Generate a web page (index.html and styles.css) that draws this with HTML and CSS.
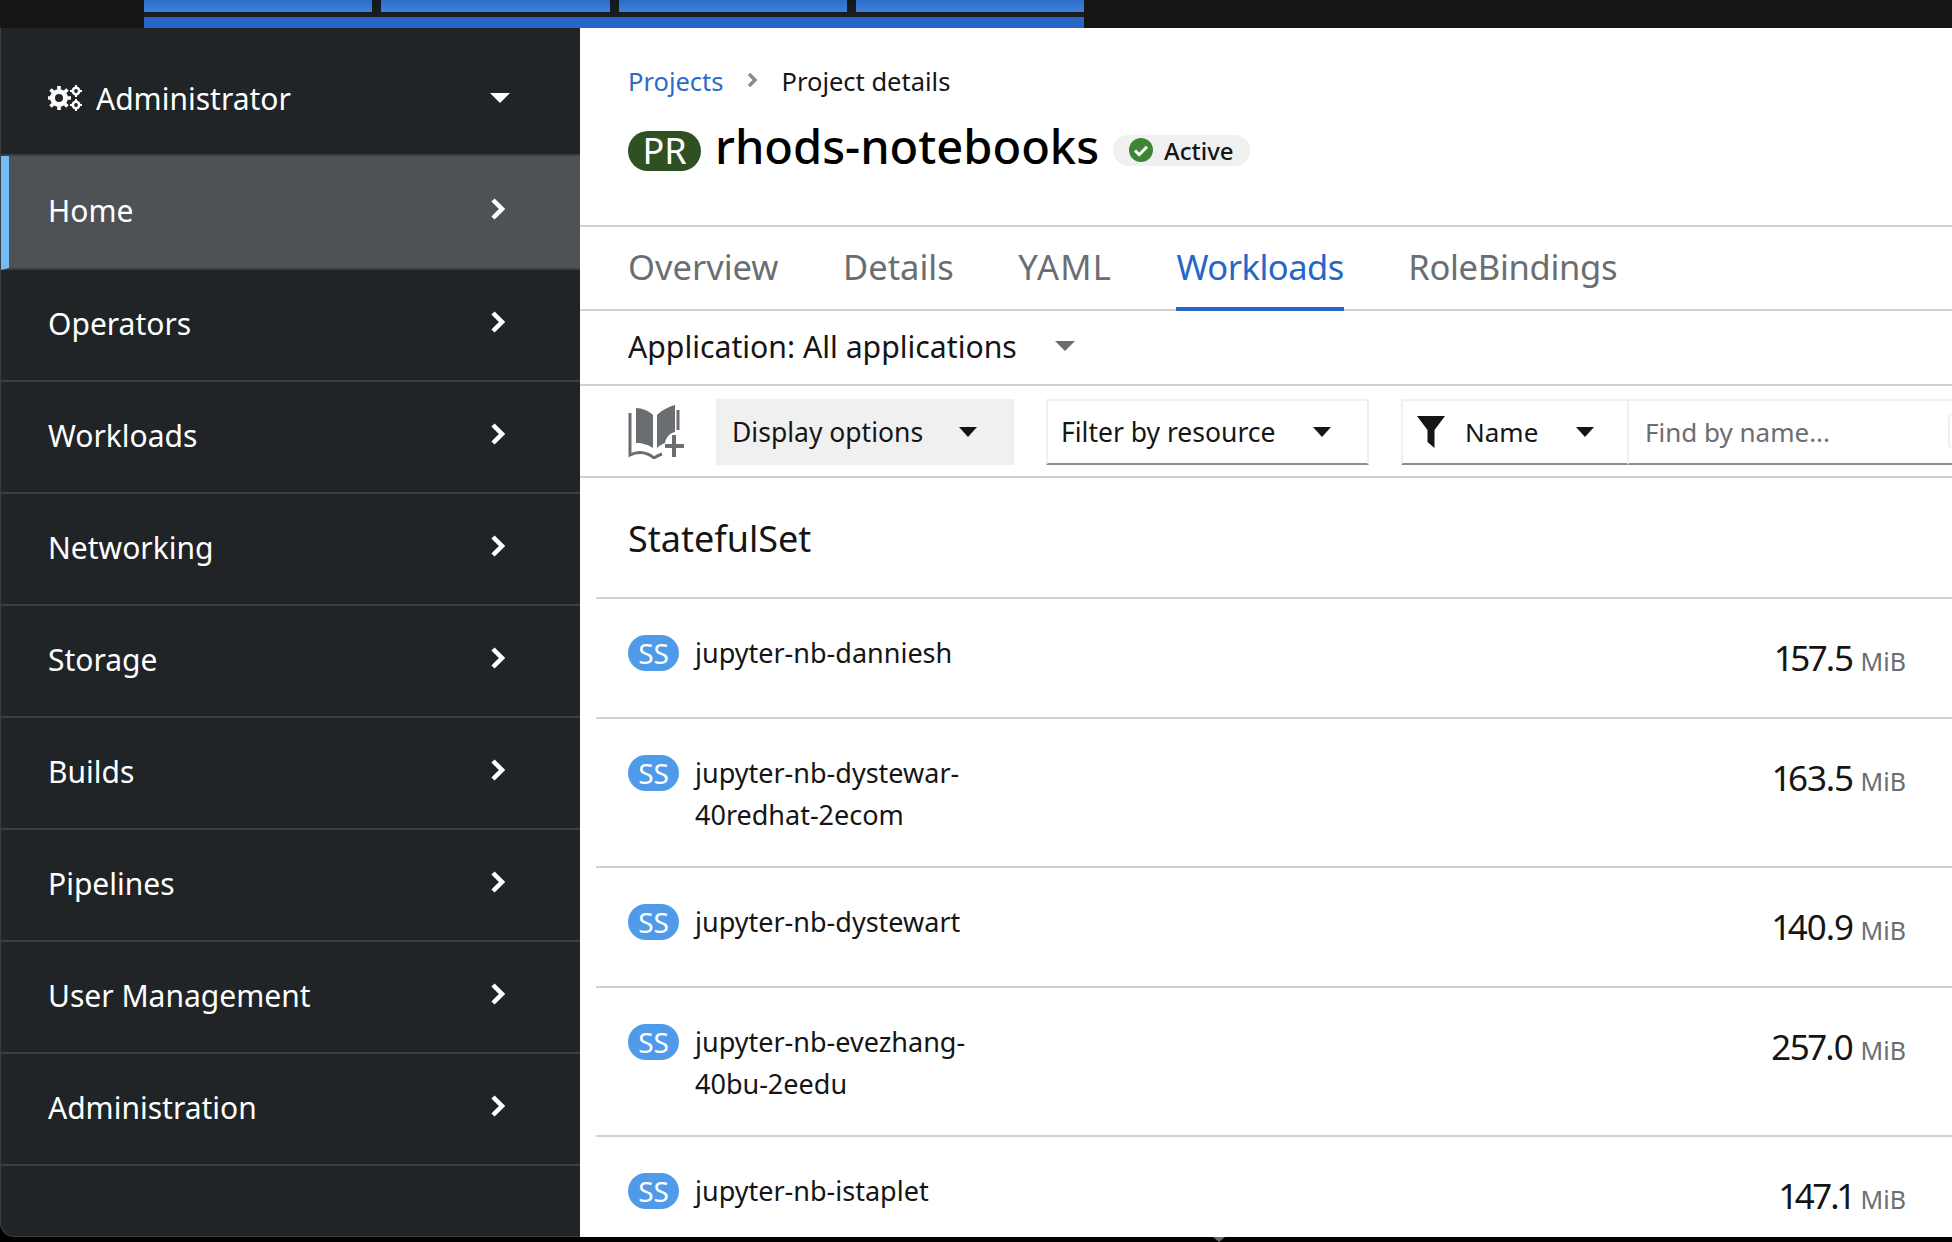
FILE: index.html
```html
<!DOCTYPE html>
<html lang="en">
<head>
  <meta charset="UTF-8">
  <title>rhods-notebooks</title>
  <link rel="stylesheet" href="styles.css">
</head>
<body>

  <div class="topbar">
    <div class="topbar-tabs">
      <span class="topbar-tab"></span>
      <span class="topbar-tab"></span>
      <span class="topbar-tab"></span>
      <span class="topbar-tab"></span>
    </div>
  </div>

  <div class="layout">
    <nav class="sidebar">
      <div class="perspective">
        <svg class="cogs" viewBox="0 0 34 26" width="34" height="26">
          <g fill="none" stroke="#fff">
            <circle cx="11" cy="13" r="6.5" stroke-width="5"/>
            <path d="M11 1v24M-1 13h24M2.5 4.5l17 17M19.5 4.5l-17 17" stroke-width="3.6" stroke-dasharray="3.6 16.8 3.6"/>
            <circle cx="28" cy="6" r="3.2" stroke-width="2.6"/>
            <circle cx="28" cy="20" r="3.2" stroke-width="2.6"/>
            <path d="M28 0v12M22 6h12M28 14v12M22 20h12" stroke-width="2" stroke-dasharray="2 8 2"/>
          </g>
        </svg>
        <span class="perspective-name">Administrator</span>
        <span class="caret caret-white"></span>
      </div>
      <a class="nav-item active">Home<svg class="chevron" viewBox="0 0 15 22"><path d="M3 2l9 9-9 9" /></svg></a>
      <a class="nav-item">Operators<svg class="chevron" viewBox="0 0 15 22"><path d="M3 2l9 9-9 9" /></svg></a>
      <a class="nav-item">Workloads<svg class="chevron" viewBox="0 0 15 22"><path d="M3 2l9 9-9 9" /></svg></a>
      <a class="nav-item">Networking<svg class="chevron" viewBox="0 0 15 22"><path d="M3 2l9 9-9 9" /></svg></a>
      <a class="nav-item">Storage<svg class="chevron" viewBox="0 0 15 22"><path d="M3 2l9 9-9 9" /></svg></a>
      <a class="nav-item">Builds<svg class="chevron" viewBox="0 0 15 22"><path d="M3 2l9 9-9 9" /></svg></a>
      <a class="nav-item">Pipelines<svg class="chevron" viewBox="0 0 15 22"><path d="M3 2l9 9-9 9" /></svg></a>
      <a class="nav-item">User Management<svg class="chevron" viewBox="0 0 15 22"><path d="M3 2l9 9-9 9" /></svg></a>
      <a class="nav-item">Administration<svg class="chevron" viewBox="0 0 15 22"><path d="M3 2l9 9-9 9" /></svg></a>
    </nav>

    <main class="content">
      <header class="page-head">
        <div class="breadcrumb">
          <a class="crumb-link">Projects</a>
          <svg class="crumb-sep" viewBox="0 0 12 18"><path d="M3 3l6 6-6 6" /></svg>
          <span>Project details</span>
        </div>
        <div class="title-row">
          <span class="badge-pr">PR</span>
          <h1>rhods-notebooks</h1>
          <span class="status">
            <svg viewBox="0 0 24 24" width="24" height="24">
              <circle cx="12" cy="12" r="12" fill="#3e8635"/>
              <path d="M6 12.500l4.200 4.200L18 8.800" fill="none" stroke="#fff" stroke-width="3"/>
            </svg>
            Active
          </span>
        </div>
      </header>

      <div class="tabs">
        <a class="tab">Overview</a>
        <a class="tab">Details</a>
        <a class="tab tab-yaml">YAML</a>
        <a class="tab current">Workloads</a>
        <a class="tab tab-last">RoleBindings</a>
      </div>

      <div class="app-bar">
        <span>Application: All applications</span>
        <span class="caret caret-grey"></span>
      </div>

      <div class="toolbar">
        <svg class="book" viewBox="0 0 56 54" width="56" height="54">
          <path fill="#6a6e73" d="M8 3c6 0 13 3 17 7v33c-4-3-11-5-17-5zM47 0v27c-5 1-9 5-10 11-3 1-6 3-8 5V10c4-4 11-8 18-10z"/>
          <path fill="none" stroke="#6a6e73" stroke-width="3" d="M2 8v42c8-4 17-3 24 3 3-2 5-3 8-4M50 5v20"/>
          <path fill="none" stroke="#6a6e73" stroke-width="4" d="M46 30v22M37 41h19"/>
        </svg>
        <div class="select select-grey">Display options<span class="caret"></span></div>
        <div class="select select-filter">Filter by resource<span class="caret"></span></div>
        <div class="search">
          <div class="search-type">
            <svg viewBox="0 0 28 32" width="28" height="32">
              <path fill="#151515" d="M0 0h28L17.500 14v18l-7-6V14z"/>
            </svg>
            Name
            <span class="caret"></span>
          </div>
          <input class="search-input" type="text" placeholder="Find by name...">
          <span class="search-hint"></span>
        </div>
      </div>

      <section class="resources">
        <h2>StatefulSet</h2>
        <div class="row">
          <span class="badge-ss">SS</span>
          <span class="row-name">jupyter-nb-danniesh</span>
          <span class="row-size">157.5 <small>MiB</small></span>
        </div>
        <div class="row">
          <span class="badge-ss">SS</span>
          <span class="row-name">jupyter-nb-dystewar-<br>40redhat-2ecom</span>
          <span class="row-size">163.5 <small>MiB</small></span>
        </div>
        <div class="row">
          <span class="badge-ss">SS</span>
          <span class="row-name">jupyter-nb-dystewart</span>
          <span class="row-size">140.9 <small>MiB</small></span>
        </div>
        <div class="row">
          <span class="badge-ss">SS</span>
          <span class="row-name">jupyter-nb-evezhang-<br>40bu-2eedu</span>
          <span class="row-size">257.0 <small>MiB</small></span>
        </div>
        <div class="row">
          <span class="badge-ss">SS</span>
          <span class="row-name">jupyter-nb-istaplet</span>
          <span class="row-size">147.1 <small>MiB</small></span>
        </div>
      </section>
    </main>
  </div>

  <span class="scroll-tip"></span>

</body>
</html>
```

FILE: styles.css
```css
* {
  box-sizing: border-box;
}

html, body {
  height: 1242px;
}

body {
  position: relative;
  margin: 0;
  overflow: hidden;
  background-color: #000;
  color: #151515;
  font-family: "Noto Sans", sans-serif;
  font-size: 30px;
}

.topbar {
  height: 28px;
  padding-left: 144px;
  background-color: #151515;
}

.topbar-tabs {
  display: flex;
  align-items: flex-start;
  gap: 9px;
  width: 940px;
  height: 28px;
  background: linear-gradient(#14171c 0, #1a1d22 17px, #2566c7 17px);
}

.topbar-tab {
  flex: 1;
  height: 12px;
  background: linear-gradient(#2a6cc8, #3f82d6);
}

.layout {
  display: flex;
  height: 1209px;
}

.sidebar {
  flex: none;
  width: 580px;
  border-left: 1px solid #3c3f42;
  border-bottom: 1px solid #3c3f42;
  border-bottom-left-radius: 14px;
  background-color: #212427;
  color: #fff;
}

.perspective {
  display: flex;
  align-items: center;
  height: 128px;
  padding: 14px 70px 0 47px;
  border-bottom: 2px solid #3c3f42;
}

.cogs {
  margin-right: 14px;
}

.perspective-name {
  flex: 1;
}

.nav-item {
  display: flex;
  align-items: center;
  justify-content: space-between;
  height: 112px;
  padding: 0 75px 3px 47px;
  border-bottom: 2px solid #3c3f42;
}

.nav-item.active {
  height: 114px;
  padding-left: 39px;
  border-left: 8px solid #73bcf7;
  background-color: #4f5255;
}

.chevron {
  width: 15px;
  height: 22px;
  margin-top: -3px;
  fill: none;
  stroke: #fff;
  stroke-width: 4.500;
}

.caret {
  flex: none;
  width: 0;
  height: 0;
  border-top: 10px solid #151515;
  border-left: 9px solid transparent;
  border-right: 9px solid transparent;
}

.caret-white {
  border-top-color: #fff;
  border-left-width: 10px;
  border-right-width: 10px;
}

.caret-grey {
  border-top-color: #6a6e73;
  border-left-width: 10px;
  border-right-width: 10px;
}

.content {
  flex: 1;
  min-width: 0;
  overflow: hidden;
  background-color: #fff;
}

.page-head {
  height: 199px;
  padding: 35px 0 0 48px;
  border-bottom: 2px solid #d2d2d2;
}

.breadcrumb {
  display: flex;
  align-items: center;
  height: 36px;
  font-size: 25.500px;
}

.crumb-link {
  color: #2b6bc8;
}

.crumb-sep {
  width: 12px;
  height: 18px;
  margin: -2px 24px 0 22px;
  fill: none;
  stroke: #8a8d90;
  stroke-width: 3.500;
}

.title-row {
  display: flex;
  align-items: center;
  margin-top: 25px;
}

.badge-pr {
  width: 73px;
  height: 40px;
  margin-right: 14px;
  border-radius: 20px;
  background-color: #2f5022;
  color: #fff;
  font-size: 36px;
  line-height: 40px;
  text-align: center;
}

h1 {
  margin: -10px 14px 0 0;
  font-size: 47px;
  font-weight: 500;
  color: #000;
}

.status {
  display: flex;
  align-items: center;
  gap: 11px;
  height: 31px;
  margin-top: -2px;
  padding: 0 16px;
  border-radius: 16px;
  background-color: #f0f0f0;
  font-size: 24px;
  font-weight: 500;
}

.tabs {
  display: flex;
  gap: 64.500px;
  height: 84px;
  padding-left: 48px;
  border-bottom: 2px solid #d2d2d2;
}

.tab {
  height: 84px;
  padding-top: 16px;
  color: #6a6e73;
  font-size: 34.500px;
}

.tab-yaml {
  letter-spacing: 1.200px;
}

.tab-last {
  letter-spacing: -0.300px;
}

.tab.current {
  border-bottom: 4px solid #2566c7;
  color: #2566c7;
  letter-spacing: -0.500px;
}

.app-bar {
  display: flex;
  align-items: center;
  gap: 38px;
  height: 75px;
  padding: 0 0 3px 48px;
  border-bottom: 2px solid #d2d2d2;
  font-size: 30.200px;
}

.toolbar {
  display: flex;
  align-items: center;
  height: 92px;
  padding: 2px 0 0 48px;
  border-bottom: 2px solid #d2d2d2;
}

.book {
  flex: none;
  margin-right: 32px;
}

.select {
  display: flex;
  flex: none;
  align-items: center;
  justify-content: space-between;
  height: 66px;
  font-size: 26.500px;
}

.select-grey {
  width: 298px;
  padding: 0 37px 0 16px;
  background-color: #f0f0f0;
}

.select-filter {
  width: 323px;
  margin-left: 32px;
  padding: 0 36px 0 13px;
  border: 2px solid #f0f0f0;
  border-bottom-color: #8a8d90;
}

.search {
  position: relative;
  display: flex;
  flex: 1;
  min-width: 0;
  height: 66px;
  margin-left: 32px;
  font-size: 26px;
}

.search-type {
  display: flex;
  flex: none;
  align-items: center;
  width: 228px;
  padding-left: 14px;
  border: 2px solid #f0f0f0;
  border-bottom-color: #8a8d90;
}

.search-type svg {
  margin-right: 20px;
}

.search-type .caret {
  margin-left: 38px;
}

.search-input {
  flex: 1;
  min-width: 0;
  padding: 0 0 0 16px;
  border: none;
  border-top: 2px solid #f0f0f0;
  border-bottom: 2px solid #8a8d90;
  border-radius: 0;
  font-family: inherit;
  font-size: 26px;
}

.search-input::placeholder {
  color: #6a6e73;
}

/* keyboard hint, only its left edge is on screen */
.search-hint {
  position: absolute;
  top: 14px;
  right: 0;
  width: 4px;
  height: 36px;
  border: 2px solid #f0f0f0;
  border-right: none;
  border-radius: 4px 0 0 4px;
}

.resources {
  padding-left: 16px;
}

h2 {
  height: 121px;
  margin: 0;
  padding: 36px 0 0 32px;
  border-bottom: 2px solid #d2d2d2;
  font-size: 36px;
  font-weight: 400;
}

.row {
  display: flex;
  align-items: flex-start;
  padding: 36px 46px 30px 32px;
  border-bottom: 2px solid #d2d2d2;
}

.badge-ss {
  flex: none;
  width: 51px;
  height: 36px;
  margin-right: 16px;
  border-radius: 18px;
  background-color: #4f9bea;
  color: #fff;
  font-size: 28px;
  line-height: 36px;
  text-align: center;
}

.row-name {
  flex: 1;
  margin-top: -3px;
  font-size: 27px;
  line-height: 42px;
}

.row-size {
  height: 56px;
  margin-top: -4px;
  font-size: 35px;
  line-height: 54px;
  font-variant-numeric: proportional-nums;
  letter-spacing: -1.200px;
}

.row-size small {
  color: #6a6e73;
  font-size: 25px;
  letter-spacing: 0;
}

.scroll-tip {
  position: absolute;
  left: 1213px;
  top: 1237px;
  border-top: 5px solid #6a6e73;
  border-left: 6px solid transparent;
  border-right: 6px solid transparent;
}
```
